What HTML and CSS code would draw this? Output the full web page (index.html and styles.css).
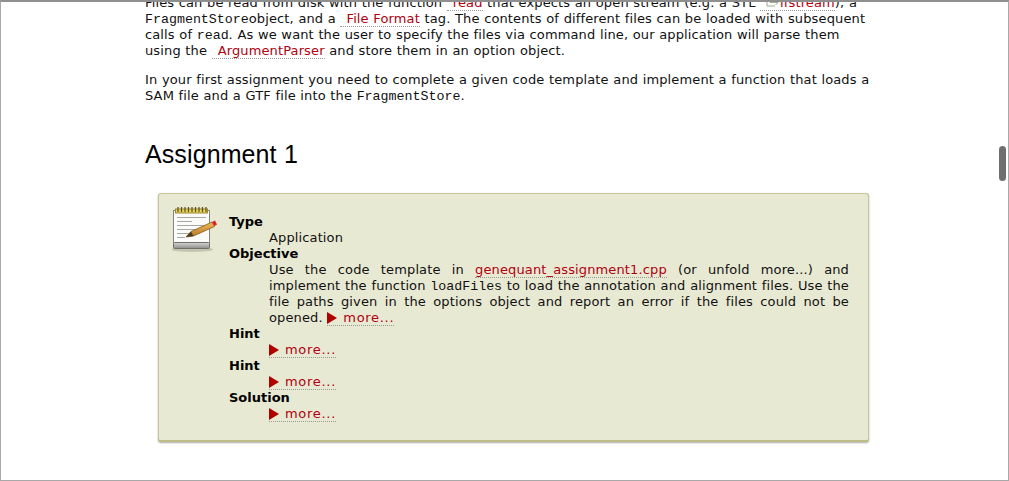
FILE: index.html
```html
<!DOCTYPE html>
<html lang="en">

<head>
  <meta charset="UTF-8">
  <meta name="viewport" content="width=device-width, initial-scale=1.0">
  <title>Assignment 1</title>

  <link rel="stylesheet" href="styles.css">
</head>

<body>
  <div class="window">
    <main class="content">
      <p class="para">Files can be read from disk with the function <a class="link" href="#">read</a> that expects an open stream (e.g. a STL <a class="link ext-link" href="#"><svg class="ext" viewBox="0 0 13 9" width="13" height="9"><path d="M9 1H1v7h8M4 4.500h8M9.500 2l2.500 2.500L9.500 7" fill="none" stroke="#9aae8e"/></svg>ifstream</a>), a <code>FragmentStore</code>object, and a <a class="link" href="#">File Format</a> tag. The contents of different files can be loaded with subsequent calls of <code>read</code>. As we want the user to specify the files via command line, our application will parse them using the <a class="link" href="#">ArgumentParser</a> and store them in an option object.</p>
      <p class="para">In your first assignment you need to complete a given code template and implement a function that loads a SAM file and a GTF file into the <code>FragmentStore</code>.</p>

      <h2 class="heading">Assignment 1</h2>

      <section class="assignment">
        <svg class="note-icon" viewBox="0 0 48 48" width="48" height="48">
          <defs>
            <linearGradient id="base" x1="0" y1="0" x2="0" y2="1">
              <stop offset="0" stop-color="#d5d6d2"/>
              <stop offset="1" stop-color="#8d8e89"/>
            </linearGradient>
            <linearGradient id="wood" x1="0" y1="0" x2="0" y2="1">
              <stop offset="0" stop-color="#f0b858"/>
              <stop offset="1" stop-color="#b87a22"/>
            </linearGradient>
          </defs>
          <ellipse cx="20" cy="44.500" rx="21" ry="2.500" fill="#c4c5b0"/>
          <rect x="1.500" y="5.500" width="36" height="33" fill="#fbfbf9" stroke="#85867f"/>
          <rect x="1.500" y="37.500" width="36" height="6" rx="1" fill="url(#base)" stroke="#6e6f6a"/>
          <rect x="3.500" y="4" width="32" height="4" fill="#e8d35c" stroke="#9a8a30"/>
          <path d="M6 2v5M9.500 2v5M13 2v5M16.500 2v5M20 2v5M23.500 2v5M27 2v5M30.500 2v5M34 2v5" stroke="#5c5220" stroke-width="1.200"/>
          <path d="M5 12.500h29M5 16.500h15M5 20.500h29M5 24.500h29M5 28.500h18M5 32.500h8" stroke="#a7a8a4"/>
          <path d="M14 32l5-5.500L40 17l2.500 4.500-21 9.500z" fill="url(#wood)" stroke="#7a4f14" stroke-width=".7"/>
          <path d="M14 32l5-5.500 2.500 4.500z" fill="#4d3b1e"/>
          <path d="M40 17l3-1.500 2 4-2.500 1.500z" fill="#d8232a"/>
        </svg>
        <dl class="fields">
          <dt>Type</dt>
          <dd>Application</dd>
          <dt>Objective</dt>
          <dd class="justified">Use the code template in <a class="link plain" href="#">genequant_assignment1.cpp</a> (or unfold more...) and implement the function <code>loadFiles</code> to load the annotation and alignment files. Use the file paths given in the options object and report an error if the files could not be opened. <a class="link more" href="#"><span class="arrow"></span>more...</a></dd>
          <dt>Hint</dt>
          <dd><a class="link more" href="#"><span class="arrow"></span>more...</a></dd>
          <dt>Hint</dt>
          <dd><a class="link more" href="#"><span class="arrow"></span>more...</a></dd>
          <dt>Solution</dt>
          <dd><a class="link more" href="#"><span class="arrow"></span>more...</a></dd>
        </dl>
      </section>
    </main>
    <div class="scroll-thumb"></div>
  </div>
</body>

</html>
```

FILE: styles.css
```css
html,
body {
  margin: 0;
  height: 100%;
}

body {
  background: #fff;
  color: #111;
  font-family: "DejaVu Sans", Verdana, sans-serif;
  font-size: 13px;
  letter-spacing: .13px;
  line-height: 16px;
  word-spacing: .3px;
}

.window {
  border: 1px solid #a8a8a8;
  border-top: 2px solid #8f8f8f;
  box-sizing: border-box;
  height: 481px;
  overflow: hidden;
  position: relative;
}

.content {
  margin: -7px 0 0 144px;
  width: 725px;
}

.para {
  margin: 0 0 13px;
}

code {
  color: #111;
  font-family: "Liberation Mono", "Courier New", monospace;
  font-size: 13.3px;
  letter-spacing: 0;
  line-height: 1;
  word-spacing: 0;
}

.link {
  border-bottom: 1px dotted #999;
  color: #b00010;
  padding-left: 6px;
  text-decoration: none;
}

.ext {
  margin-right: 1px;
}

.plain,
.more {
  padding-left: 0;
}

.more {
  letter-spacing: .7px;
}

.arrow {
  border-bottom: 6px solid transparent;
  border-left: 10px solid #b00000;
  border-top: 6px solid transparent;
  display: inline-block;
  margin-right: 6px;
  vertical-align: -2px;
}

.heading {
  color: #000;
  font-family: "Liberation Sans", Arial, sans-serif;
  font-size: 25px;
  font-weight: normal;
  letter-spacing: .1px;
  line-height: 30px;
  margin: 35px 0 24px;
}

.assignment {
  background: #e8e9d3;
  border: 1px solid #c6c69a;
  border-bottom: 2px solid #bdbd85;
  border-radius: 3px;
  box-shadow: 0 1px 2px #aaa;
  display: flex;
  margin-left: 13px;
  padding: 11px 19px 18px 13px;
  width: 677px;
}

.note-icon {
  flex: none;
  margin-right: 9px;
}

.fields {
  flex: 1;
  margin: 9px 0 0;
}

.fields dt {
  color: #000;
  font-weight: bold;
  letter-spacing: 0;
}

.fields dd {
  margin-left: 40px;
}

.justified {
  text-align: justify;
}

.scroll-thumb {
  background: #6f6f6f;
  border-radius: 4px;
  height: 35px;
  position: absolute;
  right: 2px;
  top: 144px;
  width: 7px;
}
```
